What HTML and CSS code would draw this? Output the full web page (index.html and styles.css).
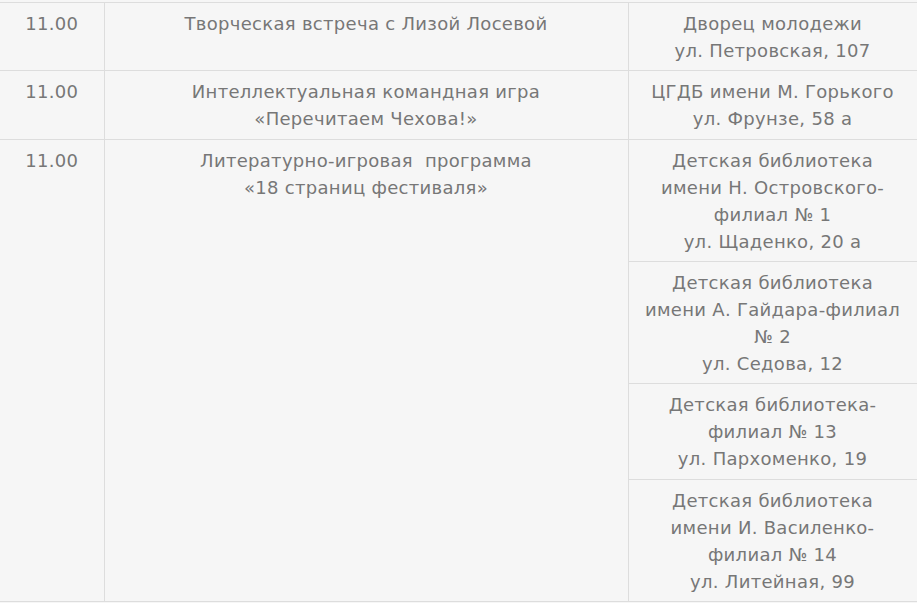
FILE: index.html
```html
<!DOCTYPE html>
<html lang="ru">
<head>
<meta charset="utf-8">
<title>Расписание</title>
<link rel="stylesheet" href="styles.css">
</head>
<body>
<table class="schedule">
  <colgroup>
    <col class="c-time">
    <col class="c-event">
    <col class="c-place">
  </colgroup>
  <tbody>
    <tr>
      <td class="time">11.00</td>
      <td class="event">Творческая встреча с Лизой Лосевой</td>
      <td class="place">Дворец молодежи<br>ул. Петровская, 107</td>
    </tr>
    <tr>
      <td class="time">11.00</td>
      <td class="event">Интеллектуальная командная игра<br>«Перечитаем Чехова!»</td>
      <td class="place">ЦГДБ имени М. Горького<br>ул. Фрунзе, 58 а</td>
    </tr>
    <tr>
      <td class="time" rowspan="4">11.00</td>
      <td class="event" rowspan="4">Литературно-игровая&nbsp; программа<br>«18 страниц фестиваля»</td>
      <td class="place">Детская библиотека<br>имени Н. Островского-<br>филиал № 1<br>ул. Щаденко, 20 а</td>
    </tr>
    <tr>
      <td class="place">Детская библиотека<br>имени А. Гайдара-филиал<br>№ 2<br>ул. Седова, 12</td>
    </tr>
    <tr>
      <td class="place">Детская библиотека-<br>филиал № 13<br>ул. Пархоменко, 19</td>
    </tr>
    <tr>
      <td class="place">Детская библиотека<br>имени И. Василенко-<br>филиал № 14<br>ул. Литейная, 99</td>
    </tr>
  </tbody>
</table>
</body>
</html>
```

FILE: styles.css
```css
html, body {
  margin: 0;
  padding: 0;
  background: #f6f6f6;
}

body {
  padding-top: 2px;
  font-family: "DejaVu Sans", Verdana, sans-serif;
  font-size: 18px;
  letter-spacing: 0.3px;
  line-height: 27px;
  color: #777777;
}

.schedule {
  border-collapse: collapse;
  table-layout: fixed;
  width: 917px;
}

.c-time { width: 104px; }
.c-event { width: 524px; }
.c-place { width: 289px; }

.schedule td {
  border-top: 1px solid #dddddd;
  border-bottom: 1px solid #dddddd;
  padding: 7px 2px 6.33px;
  text-align: center;
  vertical-align: top;
  white-space: nowrap;
}

.schedule td.event,
.schedule td.place {
  border-left: 1px solid #dddddd;
}

.schedule td.place {
  border-right: 1px solid #dddddd;
}
```
